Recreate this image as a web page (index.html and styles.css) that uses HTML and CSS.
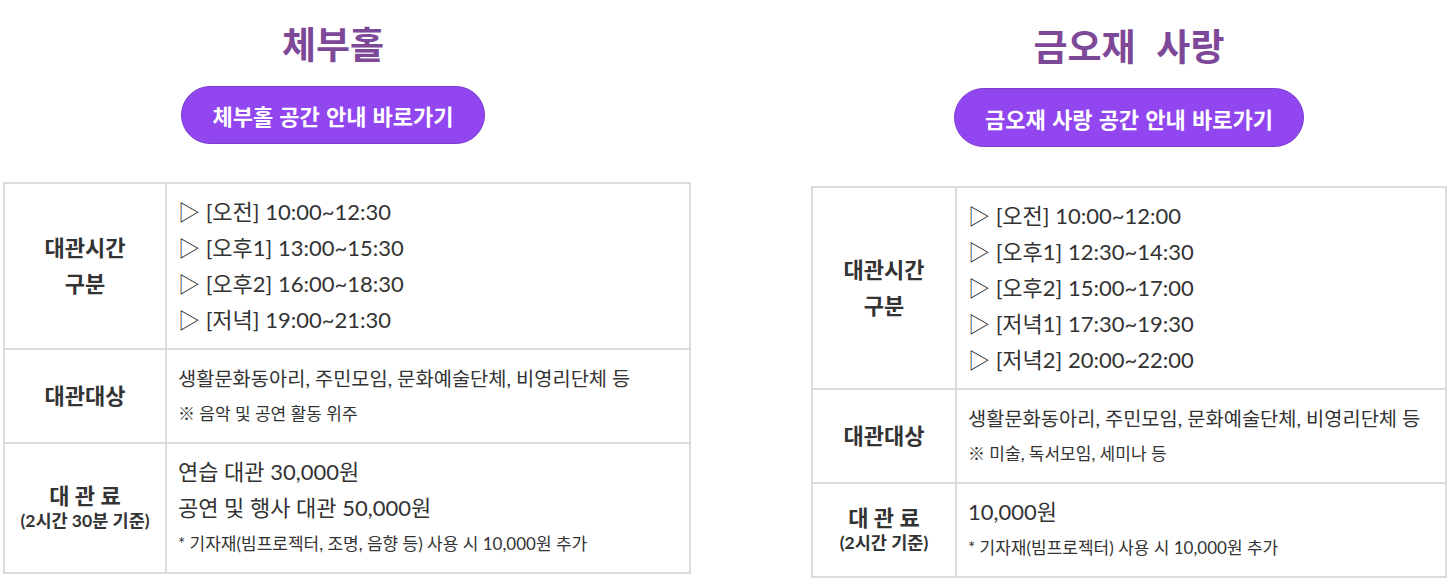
FILE: index.html
```html
<!DOCTYPE html>
<html lang="ko">
<head>
<meta charset="utf-8">
<title>대관 안내</title>
<link rel="stylesheet" href="styles.css">
</head>
<body>
<div class="page">
  <section class="space space-left">
    <div class="space-head">
      <h2 class="space-title">체부홀</h2>
      <a class="space-btn" href="#">체부홀 공간 안내 바로가기</a>
    </div>
    <table class="info">
      <colgroup><col class="col-head"><col></colgroup>
      <tr>
        <th>대관시간<br>구분</th>
        <td class="times">
          <div>▷ [오전] 10:00~12:30</div>
          <div>▷ [오후1] 13:00~15:30</div>
          <div>▷ [오후2] 16:00~18:30</div>
          <div>▷ [저녁] 19:00~21:30</div>
        </td>
      </tr>
      <tr>
        <th>대관대상</th>
        <td>
          <div class="target">생활문화동아리, 주민모임, 문화예술단체, 비영리단체 등</div>
          <div class="note">※ 음악 및 공연 활동 위주</div>
        </td>
      </tr>
      <tr>
        <th>대 관 료<br><span class="sub">(2시간 30분 기준)</span></th>
        <td>
          <div class="fee">연습 대관 30,000원</div>
          <div class="fee">공연 및 행사 대관 50,000원</div>
          <div class="note">* 기자재(빔프로젝터, 조명, 음향 등) 사용 시 10,000원 추가</div>
        </td>
      </tr>
    </table>
  </section>
  <section class="space space-right">
    <div class="space-head">
      <h2 class="space-title">금오재&nbsp; 사랑</h2>
      <a class="space-btn" href="#">금오재 사랑 공간 안내 바로가기</a>
    </div>
    <table class="info">
      <colgroup><col class="col-head"><col></colgroup>
      <tr>
        <th>대관시간<br>구분</th>
        <td class="times">
          <div>▷ [오전] 10:00~12:00</div>
          <div>▷ [오후1] 12:30~14:30</div>
          <div>▷ [오후2] 15:00~17:00</div>
          <div>▷ [저녁1] 17:30~19:30</div>
          <div>▷ [저녁2] 20:00~22:00</div>
        </td>
      </tr>
      <tr>
        <th>대관대상</th>
        <td>
          <div class="target">생활문화동아리, 주민모임, 문화예술단체, 비영리단체 등</div>
          <div class="note">※ 미술, 독서모임, 세미나 등</div>
        </td>
      </tr>
      <tr>
        <th>대 관 료<br><span class="sub">(2시간 기준)</span></th>
        <td>
          <div class="fee">10,000원</div>
          <div class="note">* 기자재(빔프로젝터) 사용 시 10,000원 추가</div>
        </td>
      </tr>
    </table>
  </section>
</div>
</body>
</html>
```

FILE: styles.css
```css
* { box-sizing: border-box; }

html, body {
  margin: 0;
  padding: 0;
  background: #ffffff;
}

body {
  font-family: Lato, "Noto Sans CJK KR", sans-serif;
  color: #333333;
}

.page {
  display: flex;
  align-items: flex-start;
  gap: 120px;
  padding-left: 3px;
}

.space-left { width: 688px; }
.space-right { width: 636px; padding-top: 2px; }

.space-head {
  display: flex;
  flex-direction: column;
  align-items: center;
}

.space-left .space-head { width: 660px; }

.space-title {
  margin: 15px 0 0;
  font-family: "Noto Sans CJK KR", sans-serif;
  font-size: 37px;
  font-weight: 700;
  line-height: 56px;
  color: #7e4898;
}

.space-btn {
  display: inline-flex;
  align-items: center;
  justify-content: center;
  height: 58px;
  margin-top: 15px;
  padding: 0 30px;
  border: 1px solid #7a3cd0;
  border-radius: 30px;
  background: #9146f0;
  color: #ffffff;
  text-decoration: none;
  font-family: "Noto Sans CJK KR", sans-serif;
  font-size: 22px;
  font-weight: 700;
}

.space-right .space-btn { height: 59px; }

.info {
  width: 100%;
  margin-top: 38px;
  border-collapse: collapse;
  table-layout: fixed;
  border: 2px solid #dcdcdc;
}

.space-right .info { margin-top: 39px; }

.space-left .col-head { width: 162px; }
.space-right .col-head { width: 144px; }

.info th,
.info td {
  border: 2px solid #dcdcdc;
  vertical-align: middle;
}

.info th {
  padding: 10px 4px;
  font-size: 22px;
  font-weight: 700;
  line-height: 36px;
  text-align: center;
  color: #333333;
}

.info td {
  padding: 10px 11px;
  text-align: left;
  line-height: 36px;
}

.times {
  font-size: 22px;
}

.target {
  font-size: 19.8px;
}

.fee {
  font-size: 22px;
}

.note {
  font-size: 17px;
}

.sub {
  display: block;
  font-size: 17.5px;
  line-height: 22px;
  margin-top: -4px;
  margin-bottom: 6px;
}
```
